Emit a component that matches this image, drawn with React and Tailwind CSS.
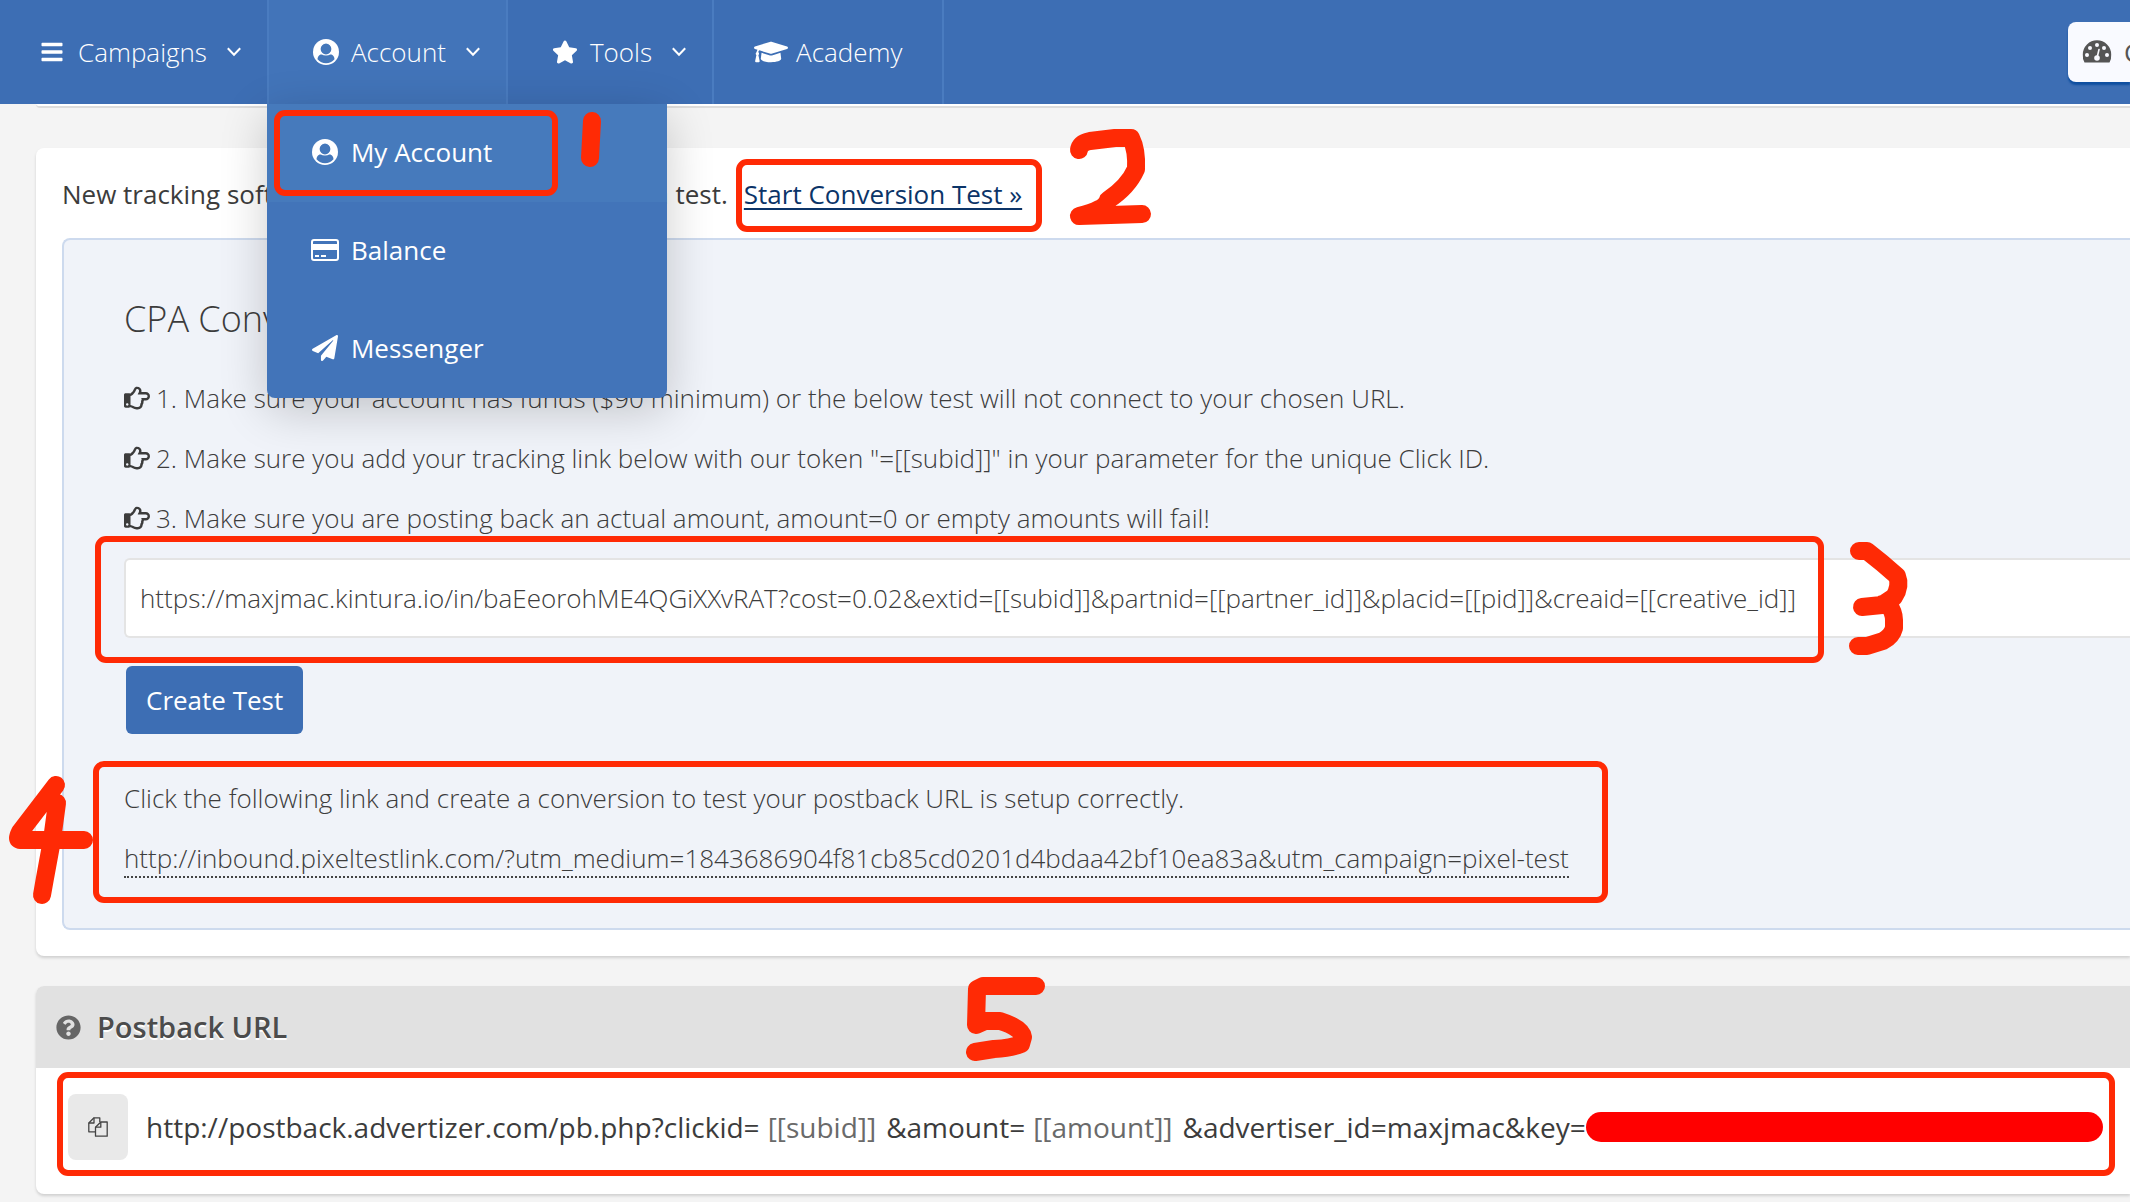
import React from "react";
import {
  FaBars, FaStar, FaGraduationCap, FaPaperPlane,
  FaRegHandPointRight, FaQuestionCircle,
} from "react-icons/fa";

const INK = "#ff2a05";

function UserIcon() {
  return (
    <svg viewBox="0 0 26 26" className="size-[26px]" aria-hidden="true">
      <circle cx="13" cy="13" r="13" fill="#fff" />
      <path d="M7.500 15.500Q4.800 16.500 4.500 20.200Q8 24.200 13 24.200Q18 24.200 21.500 20.200Q21.200 16.500 18.500 15.500z" fill="#4477ba" />
      <circle cx="13" cy="10" r="6" fill="#4477ba" stroke="#fff" strokeWidth="1.200" />
    </svg>
  );
}

function CardIcon() {
  return (
    <svg viewBox="0 0 28 24" className="h-6 w-7" fill="#fff" aria-hidden="true">
      <path fillRule="evenodd" d="M3 1h22a3 3 0 0 1 3 3v16a3 3 0 0 1-3 3H3a3 3 0 0 1-3-3V4a3 3 0 0 1 3-3zm-1 5h24V4q0-1-1-1H3q-1 0-1 1zm0 6v8q0 1 1 1h22q1 0 1-1v-8z" />
      <path d="M4 17h4v2H4zM10 17h5v2h-5z" />
    </svg>
  );
}

function CaretIcon() {
  return (
    <svg viewBox="0 0 14 10" className="ml-5 h-2.5 w-3.5" fill="none" stroke="#fff" strokeWidth="2" aria-hidden="true">
      <path d="M.8 1.200L7 7.800L13.200 1.200" />
    </svg>
  );
}

function CopyIcon() {
  return (
    <svg viewBox="0 0 20 20" className="size-5" fill="none" stroke="#444" strokeWidth="1.300" strokeLinejoin="round" aria-hidden="true">
      <path d="M7.500 14.800H.8V6L6 .8H11.800V5" />
      <path d="M6 .8V6H.8" />
      <path d="M12.800 5H19.200V19.200H7.500V10.200z" />
      <path d="M12.800 5V10.200H7.500" />
    </svg>
  );
}

function GaugeIcon() {
  return (
    <svg viewBox="0 0 30 24" className="h-6 w-[30px]" aria-hidden="true">
      <path d="M2.500 22.500A14 14 0 0 1 .8 14.500a14.200 14.200 0 0 1 28.400 0 14 14 0 0 1-1.700 8z" fill="#555" />
      <g fill="#f9faff">
        <circle cx="5" cy="15" r="2" /><circle cx="8" cy="8" r="2" /><circle cx="15" cy="5" r="2" />
        <circle cx="22" cy="8" r="2" /><circle cx="25" cy="15" r="2" /><circle cx="15" cy="18" r="2.800" />
      </g>
      <path d="M15 18l2-8.500" stroke="#f9faff" strokeWidth="1.600" strokeLinecap="round" />
    </svg>
  );
}

function NavItem({ icon, label, caret, className }) {
  return (
    <button type="button" className={"flex h-full items-center border-r-2 border-[#4a7cc0] text-[26px] font-light text-white " + className}>
      {icon}
      <span>{label}</span>
      {caret && <CaretIcon />}
    </button>
  );
}

const menu = [
  { label: "My Account", icon: <UserIcon />, tone: "bg-[#467abc]" },
  { label: "Balance", icon: <CardIcon />, tone: "" },
  { label: "Messenger", icon: <FaPaperPlane className="size-[26px]" />, tone: "" },
];

const steps = [
  "1. Make sure your account has funds ($90 minimum) or the below test will not connect to your chosen URL.",
  "2. Make sure you add your tracking link below with our token \"=[[subid]]\" in your parameter for the unique Click ID.",
  "3. Make sure you are posting back an actual amount, amount=0 or empty amounts will fail!",
];

const frames = [
  [277, 113, 278, 80],
  [739, 162, 300, 67],
  [98, 539, 1723, 121],
  [96, 764, 1509, 136],
  [60, 1075, 2052, 98],
];

const strokes = [
  "M592 121L590 158",
  "M1079 150Q1080 143 1090 141L1115 138L1131 138Q1137 150 1136 169Q1128 187 1108 200Q1105 210 1079 216L1142 214",
  "M1859 551L1867 551L1882 563L1897 576Q1901 586 1894 597L1882 605L1862 607M1882 604L1888 604Q1894 612 1894 620L1894 628Q1892 636 1883 641L1867 646L1858 646",
  "M56 785L20 832Q16 840 20 840L84 840M57 803L52 840L45 878L42 895",
  "M1036 986L983 986L977 989L976 1025L985 1021L1000 1021Q1022 1028 1023 1037L1021 1044Q1012 1048 994 1049L975 1052",
];

function Annotations() {
  return (
    <svg className="pointer-events-none absolute left-0 top-0 z-30 h-[1202px] w-[2130px] max-w-none" viewBox="0 0 2130 1202" fill="none" stroke={INK} aria-hidden="true">
      {frames.map(([x, y, w, h]) => (
        <rect key={x} x={x} y={y} width={w} height={h} rx="8" strokeWidth="6" />
      ))}
      {strokes.map((d) => (
        <path key={d} d={d} strokeWidth="18" strokeLinecap="round" strokeLinejoin="round" />
      ))}
    </svg>
  );
}

export default function App() {
  return (
    <div className="relative min-h-screen overflow-hidden bg-[#f4f4f4] font-['Open_Sans',sans-serif] text-[26px] text-[#3c3c3c]">
      <header className="relative z-20 flex h-[104px] items-center bg-[#3d6eb4]">
        <NavItem className="pl-10 pr-[26px]" icon={<FaBars className="mr-3.5 size-6" />} label="Campaigns" caret />
        <div className="relative h-full">
          <NavItem className="bg-[#4274b9] pl-11 pr-[26px]" icon={<span className="mr-3"><UserIcon /></span>} label="Account" caret />
          <nav className="absolute -left-0.5 top-full w-[400px] overflow-hidden rounded-b-lg bg-[#4274b9] shadow-[0_12px_48px_rgba(0,0,0,0.2)]">
            {menu.map((m) => (
              <a key={m.label} href="#menu" className={"flex h-[98px] items-center gap-3 pb-0.5 pl-11 text-[26px] text-white " + m.tone}>
                <span className="flex w-7 justify-center">{m.icon}</span>
                {m.label}
              </a>
            ))}
          </nav>
        </div>
        <NavItem className="pl-11 pr-[26px]" icon={<FaStar className="mr-3 size-[26px]" />} label="Tools" caret />
        <NavItem className="px-10" icon={<FaGraduationCap className="mr-2 size-[34px]" />} label="Academy" />
        <button type="button" className="ml-auto flex h-[60px] w-[62px] items-center gap-3 overflow-hidden rounded-l-lg bg-[#f9faff] pl-[14px] text-[#555] shadow-[0_3px_2px_#0f4fa0]">
          <span className="shrink-0"><GaugeIcon /></span>
          <span>C</span>
        </button>
      </header>

      <main className="pl-9">
        <div className="h-1 rounded-bl-lg border-b-2 border-[#dcdcdc] bg-white" />

        <section className="mt-10 rounded-l-lg bg-white pb-[26px] pl-[26px] shadow-[0_2px_3px_rgba(0,0,0,0.15)]">
          <p className="flex h-[90px] items-center gap-4 whitespace-nowrap pt-0.5">
            <span className="font-medium">New tracking software? Please run this conversion test.</span>
            <a href="#test" className="text-[#0b3468] underline decoration-2 underline-offset-4">Start Conversion Test »</a>
          </p>
          <div className="rounded-l-lg border-2 border-r-0 border-[#cddaee] bg-[#f0f3f9] pb-10 pl-[60px] pt-12 font-light">
            <h2 className="h-16 text-[36px] leading-[62px]">CPA Conversion Test</h2>
            <ul className="pt-4">
              {steps.map((s) => (
                <li key={s} className="flex h-[60px] items-center gap-1.5 whitespace-nowrap">
                  <FaRegHandPointRight className="size-[26px]" />
                  {s}
                </li>
              ))}
            </ul>
            <input
              aria-label="Tracking link"
              readOnly
              className="mt-2.5 h-20 w-full rounded-l-md border-2 border-r-0 border-[#e4e4e4] bg-white px-3.5 font-light"
              value="https://maxjmac.kintura.io/in/baEeorohME4QGiXXvRAT?cost=0.02&extid=[[subid]]&partnid=[[partner_id]]&placid=[[pid]]&creaid=[[creative_id]]"
            />
            <button type="button" className="ml-0.5 mt-7 flex h-[68px] items-center rounded-md bg-[#3d6eb4] px-5 font-normal text-white">Create Test</button>
            <p className="mt-[34px] leading-[60px]">Click the following link and create a conversion to test your postback URL is setup correctly.</p>
            <p className="leading-[60px]">
              <a href="#inbound" className="border-b-2 border-dotted border-[#444]">http://inbound.pixeltestlink.com/?utm_medium=1843686904f81cb85cd0201d4bdaa42bf10ea83a&amp;utm_campaign=pixel-test</a>
            </p>
          </div>
        </section>

        <section className="mt-[30px] overflow-hidden rounded-l-lg bg-white shadow-[0_2px_3px_rgba(0,0,0,0.15)]">
          <h2 className="flex h-[82px] items-center gap-4 bg-[#e1e1e1] pl-5 text-[29px] font-semibold text-[#4c4c4c] [text-shadow:0_2px_0_#fff]">
            <FaQuestionCircle className="size-[25px] text-[#666]" />
            Postback URL
          </h2>
          <div className="flex h-[126px] items-center whitespace-nowrap pb-2 pl-8 text-[28px]">
            <button type="button" aria-label="Copy" className="mr-[18px] flex h-[66px] w-[60px] shrink-0 items-center justify-center rounded-lg bg-[#e9e9e9]">
              <CopyIcon />
            </button>
            <span>http://postback.advertizer.com/pb.php?clickid=</span>
            <span className="mx-2 font-medium text-[#6a6a6a]">[[subid]]</span>
            <span className="ml-0.5">&amp;amount=</span>
            <span className="mx-2 font-medium text-[#6a6a6a]">[[amount]]</span>
            <span className="ml-0.5">&amp;advertiser_id=maxjmac&amp;key=</span>
            <span className="h-[30px] w-[517px] shrink-0 rounded-full bg-[#ff0000]" />
          </div>
        </section>
      </main>
      <Annotations />
    </div>
  );
}
